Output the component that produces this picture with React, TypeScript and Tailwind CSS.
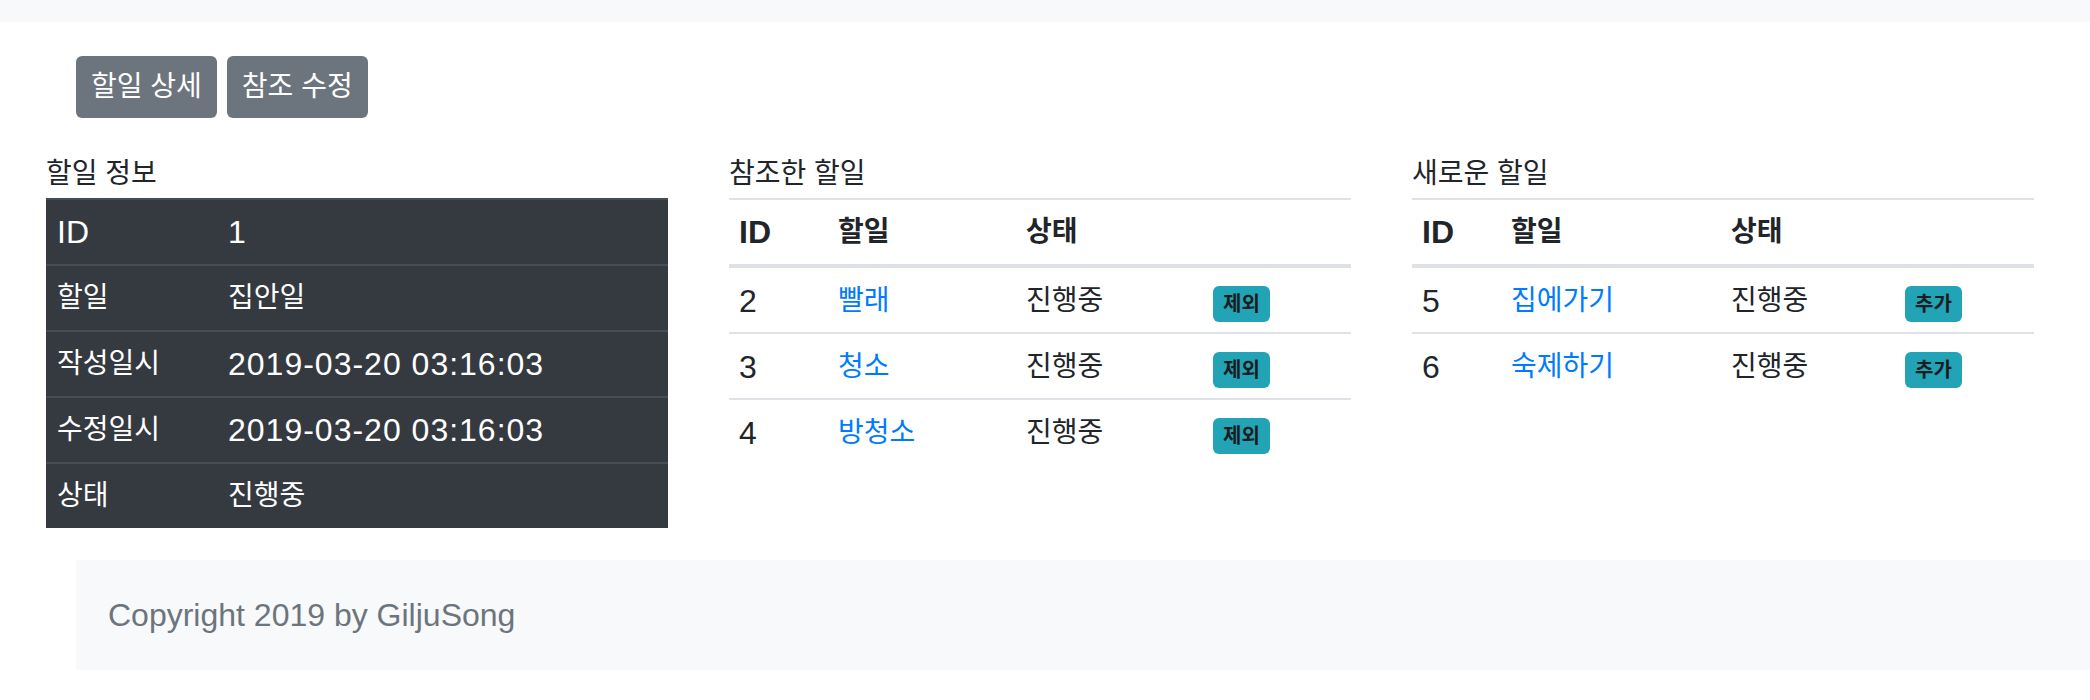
import React from 'react';

type Todo = { id: number; title: string; status: string };

const referred: Todo[] = [
  { id: 2, title: '빨래', status: '진행중' },
  { id: 3, title: '청소', status: '진행중' },
  { id: 4, title: '방청소', status: '진행중' },
];

const fresh: Todo[] = [
  { id: 5, title: '집에가기', status: '진행중' },
  { id: 6, title: '숙제하기', status: '진행중' },
];

const info = [
  { label: 'ID', value: '1' },
  { label: '할일', value: '집안일' },
  { label: '작성일시', value: '2019-03-20 03:16:03' },
  { label: '수정일시', value: '2019-03-20 03:16:03' },
  { label: '상태', value: '진행중' },
];

// hangul runs a bit smaller so the glyphs take the width they have in the shot
const isKo = (s: string) => /[가-힣]/.test(s);

const Title = ({ children }: { children: string }) => (
  <div className="text-[28px] leading-[48px] text-[#212529]">{children}</div>
);

const TodoTable = ({
  rows,
  cols,
  action,
}: {
  rows: Todo[];
  cols: string[];
  action: string;
}) => (
  <div className="w-[622px] flex flex-col">
    <Title>{action === '제외' ? '참조한 할일' : '새로운 할일'}</Title>
    <table className="w-[622px] table-fixed text-[#212529]">
      <colgroup>
        {cols.map((c, i) => (
          <col key={i} className={c} />
        ))}
      </colgroup>
      <thead>
        <tr>
          <th className="border-t-2 border-b-4 border-[#dee2e6] px-[10px] py-[8px] text-left text-[32px] leading-[48px] font-bold">
            ID
          </th>
          <th className="border-t-2 border-b-4 border-[#dee2e6] px-[10px] py-[8px] text-left text-[28px] leading-[48px] font-bold">
            할일
          </th>
          <th className="border-t-2 border-b-4 border-[#dee2e6] px-[10px] py-[8px] text-left text-[28px] leading-[48px] font-bold">
            상태
          </th>
          <th className="border-t-2 border-b-4 border-[#dee2e6] px-[10px] py-[8px]" />
        </tr>
      </thead>
      <tbody>
        {rows.map((r) => (
          <tr key={r.id}>
            <td className="border-t-2 border-[#dee2e6] px-[10px] pt-[9px] pb-[7px] text-[32px] leading-[48px]">
              {r.id}
            </td>
            <td className="border-t-2 border-[#dee2e6] px-[10px] pt-[9px] pb-[7px] text-[28px] leading-[48px]">
              <a className="text-[#007bff]">{r.title}</a>
            </td>
            <td className="border-t-2 border-[#dee2e6] px-[10px] pt-[9px] pb-[7px] text-[28px] leading-[48px]">
              {r.status}
            </td>
            <td className="border-t-2 border-[#dee2e6] px-[10px] pt-[9px] pb-[7px] leading-[48px]">
              <span className="inline-flex items-center h-[36px] px-[10px] mt-[9px] align-top rounded-[6px] bg-[#22a3b6] text-[20px] font-bold text-[#1b1e21]">
                {action}
              </span>
            </td>
          </tr>
        ))}
      </tbody>
    </table>
  </div>
);

export default function App() {
  return (
    <div className="min-h-[700px] bg-white font-['Liberation_Sans','Noto_Sans_CJK_KR',sans-serif]">
      <div className="h-[22px] bg-[#f8f9fa]" />

      <div className="flex gap-[10px] pl-[76px] mt-[34px]">
        <button className="h-[62px] px-[15px] rounded-[6px] bg-[#6c757d] text-white text-[28px]">
          할일 상세
        </button>
        <button className="h-[62px] px-[15px] rounded-[6px] bg-[#6c757d] text-white text-[28px]">
          참조 수정
        </button>
      </div>

      <div className="flex items-start gap-[61px] pl-[46px] mt-[32px]">
        <div className="w-[622px] flex flex-col">
          <Title>할일 정보</Title>
          <table className="w-[622px] table-fixed bg-[#343a40] text-white">
            <colgroup>
              <col className="w-[172px]" />
              <col />
            </colgroup>
            <tbody>
              {info.map((row) => (
                <tr key={row.label}>
                  <td
                    className={`border-t-2 border-[#454d55] px-[11px] py-[8px] leading-[48px] ${
                      isKo(row.label) ? 'text-[28px]' : 'text-[32px]'
                    }`}
                  >
                    {row.label}
                  </td>
                  <td
                    className={`border-t-2 border-[#454d55] px-[10px] py-[8px] leading-[48px] ${
                      isKo(row.value) ? 'text-[28px]' : 'text-[32px] tracking-[1px]'
                    }`}
                  >
                    {row.value}
                  </td>
                </tr>
              ))}
            </tbody>
          </table>
        </div>

        <TodoTable
          rows={referred}
          action="제외"
          cols={['w-[99px]', 'w-[188px]', 'w-[187px]', 'w-[148px]']}
        />
        <TodoTable
          rows={fresh}
          action="추가"
          cols={['w-[89px]', 'w-[220px]', 'w-[174px]', 'w-[139px]']}
        />
      </div>

      <div className="ml-[76px] mt-[32px] h-[110px] bg-[#f8f9fa] flex items-center pl-[32px] text-[32px] text-[#6c757d]">
        Copyright 2019 by GiljuSong
      </div>
    </div>
  );
}
